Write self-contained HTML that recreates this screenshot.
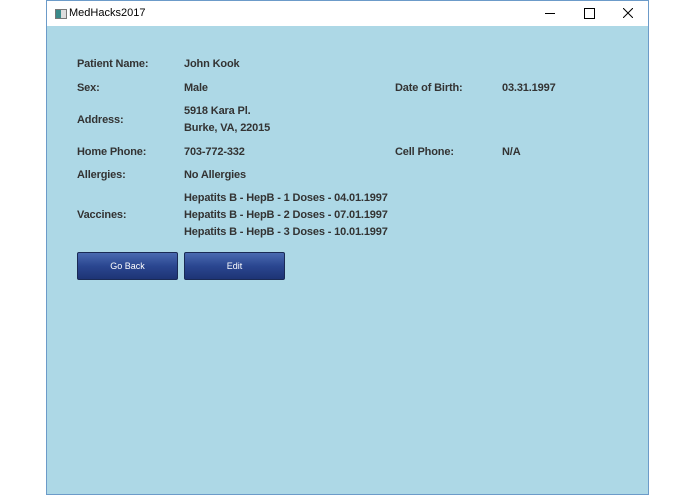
<!DOCTYPE html>
<html><head><style>
body{margin:0;width:695px;height:494px;background:#fff;position:relative;overflow:hidden;font-family:"Liberation Sans",sans-serif}
.win{position:absolute;left:46px;top:0;width:601px;height:493px;border:1px solid #6c9bc9;background:#add8e6}
.tb{position:absolute;left:0;top:0;width:601px;height:25px;background:#fff;font-size:11px;color:#000}
.t{position:absolute;font-size:11px;letter-spacing:-0.15px;font-weight:bold;color:#333;line-height:13px;white-space:nowrap}
.btn{position:absolute;width:99px;height:26px;top:252px;border:1px solid #1a2a55;border-radius:2px;background:linear-gradient(#4a6ab0,#2a4690 50%,#1e3475);color:#fff;font-size:9px;text-align:center;line-height:26px}
</style></head><body>
<div class="win">
<div class="tb">
<div style="position:absolute;left:8px;top:8px;width:10px;height:8px;border:1px solid #777;background:linear-gradient(90deg,#3a8a8a 50%,#ddd 50%)"></div>
<div style="position:absolute;left:22px;top:6px">MedHacks2017</div>
<div style="position:absolute;left:498px;top:12px;width:10px;height:1px;background:#000"></div>
<div style="position:absolute;left:537px;top:7px;width:9px;height:9px;border:1px solid #000"></div>
<svg style="position:absolute;left:576px;top:7px" width="10" height="10"><path d="M0 0L10 10M10 0L0 10" stroke="#000" stroke-width="1"/></svg>
</div>
</div>
<div class="t" style="left:77px;top:58px">Patient Name:</div><div class="t" style="left:184px;top:58px">John Kook</div>
<div class="t" style="left:77px;top:82px">Sex:</div><div class="t" style="left:184px;top:82px">Male</div>
<div class="t" style="left:395px;top:82px">Date of Birth:</div><div class="t" style="left:502px;top:82px">03.31.1997</div>
<div class="t" style="left:77px;top:114px">Address:</div><div class="t" style="left:184px;top:105px">5918 Kara Pl.</div><div class="t" style="left:184px;top:122px">Burke, VA, 22015</div>
<div class="t" style="left:77px;top:146px">Home Phone:</div><div class="t" style="left:184px;top:146px">703-772-332</div>
<div class="t" style="left:395px;top:146px">Cell Phone:</div><div class="t" style="left:502px;top:146px">N/A</div>
<div class="t" style="left:77px;top:169px">Allergies:</div><div class="t" style="left:184px;top:169px">No Allergies</div>
<div class="t" style="left:77px;top:209px">Vaccines:</div>
<div class="t" style="left:184px;top:192px">Hepatits B - HepB - 1 Doses - 04.01.1997</div>
<div class="t" style="left:184px;top:209px">Hepatits B - HepB - 2 Doses - 07.01.1997</div>
<div class="t" style="left:184px;top:226px">Hepatits B - HepB - 3 Doses - 10.01.1997</div>
<div class="btn" style="left:77px">Go Back</div>
<div class="btn" style="left:184px">Edit</div>
</body></html>
